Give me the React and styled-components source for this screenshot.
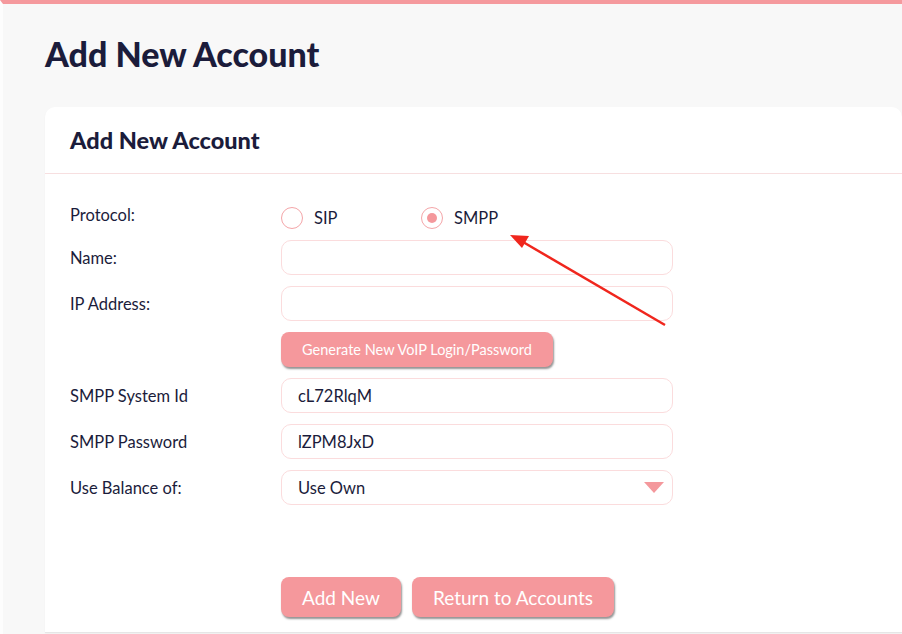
import styled, { createGlobalStyle } from "styled-components";

const Global = createGlobalStyle`
  html, body { margin: 0; padding: 0; }
  body {
    background: #f8f8f8;
    font-family: Lato, "Open Sans", sans-serif;
    color: #1b1c3b;
  }
`;

const Page = styled.div`
  position: relative;
  width: 902px;
  height: 634px;
  overflow: hidden;
  box-sizing: border-box;
  border-top: 4px solid #f5999d;
  border-left: 3px solid #fdfdfd;
  padding-left: 42px;
`;

const Title = styled.h1`
  margin: 30px 0 0;
  font-size: 34px;
  line-height: 40px;
  font-weight: 900;
  color: #1b1c3b;
`;

const Card = styled.section`
  margin-top: 33px;
  width: 857px;
  height: 526px;
  background: #fff;
  border-radius: 10px 10px 0 0;
  box-shadow: 0 1px 2px rgba(0, 0, 0, 0.04);
  border-bottom: 1px solid #e6e6e6;
  box-sizing: border-box;
  display: flex;
  flex-direction: column;
`;

const CardHeader = styled.div`
  height: 66px;
  display: flex;
  align-items: center;
  padding: 0 25px;
  border-bottom: 1px solid #f7dfe0;
  font-size: 23.5px;
  font-weight: 900;
`;

const Form = styled.div`
  display: grid;
  grid-template-columns: 211px 392px;
  grid-template-rows: 23px;
  grid-auto-rows: 35px;
  row-gap: 11px;
  padding: 32px 0 0 25px;
  align-items: center;
`;

const Label = styled.div`
  font-size: 16.5px;
  color: #1b1c3b;
  ${(p) => p.$up && "margin-top: -6px;"}
`;

const RadioRow = styled.div`
  display: flex;
  align-items: center;
  height: 23px;
`;

const Radio = styled.span`
  width: 20px;
  height: 20px;
  border: 1.5px solid #f4a5a8;
  border-radius: 50%;
  display: inline-flex;
  align-items: center;
  justify-content: center;
  margin-right: 11px;
  &::after {
    content: "";
    width: 10px;
    height: 10px;
    border-radius: 50%;
    background: ${(p) => (p.$on ? "#f4989c" : "transparent")};
  }
`;

const RadioText = styled.span`
  font-size: 16.5px;
  width: ${(p) => p.$w}px;
`;

const Input = styled.div`
  height: 35px;
  box-sizing: border-box;
  border: 1px solid #fbdcdd;
  border-radius: 10px;
  display: flex;
  align-items: center;
  justify-content: space-between;
  padding: 0 8px 0 16px;
  font-size: 16.5px;
  color: #1b1c3b;
`;

const Caret = styled.span`
  width: 0;
  height: 0;
  border-left: 10px solid transparent;
  border-right: 10px solid transparent;
  border-top: 11px solid #f4989c;
`;

const Button = styled.button`
  height: 35px;
  border: none;
  border-radius: 8px;
  background: #f5989c;
  color: #fff;
  font-family: inherit;
  font-size: ${(p) => (p.$big ? 19 : 14.5)}px;
  padding: 0 21px;
  box-shadow: 1px 2px 2px rgba(60, 60, 60, 0.55);
  cursor: pointer;
  justify-self: start;
`;

const Actions = styled.div`
  display: flex;
  gap: 11px;
  padding: 72px 0 0 236px;
  & > button {
    height: 40px;
  }
`;

const Arrow = styled.svg`
  position: absolute;
  left: 0;
  top: 0;
  pointer-events: none;
`;

export default function App() {
  return (
    <>
      <Global />
      <Page>
        <Title>Add New Account</Title>
        <Card>
          <CardHeader>Add New Account</CardHeader>
          <Form>
            <Label $up>Protocol:</Label>
            <RadioRow>
              <Radio />
              <RadioText $w={107}>SIP</RadioText>
              <Radio $on />
              <RadioText>SMPP</RadioText>
            </RadioRow>
            <Label>Name:</Label>
            <Input />
            <Label>IP Address:</Label>
            <Input />
            <div />
            <Button>Generate New VoIP Login/Password</Button>
            <Label>SMPP System Id</Label>
            <Input>cL72RlqM</Input>
            <Label>SMPP Password</Label>
            <Input>lZPM8JxD</Input>
            <Label>Use Balance of:</Label>
            <Input>
              Use Own
              <Caret />
            </Input>
          </Form>
          <Actions>
            <Button $big>Add New</Button>
            <Button $big>Return to Accounts</Button>
          </Actions>
        </Card>
        <Arrow width="902" height="634" viewBox="0 0 902 634">
          <line x1="662" y1="321" x2="520" y2="238" stroke="#f0261d" strokeWidth="2.5" />
          <polygon points="507,231 526,232 519,244" fill="#f0261d" />
        </Arrow>
      </Page>
    </>
  );
}
